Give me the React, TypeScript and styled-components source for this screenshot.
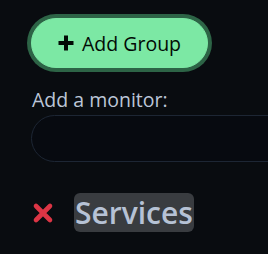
import styled, { createGlobalStyle } from 'styled-components'

const GlobalStyle = createGlobalStyle`
  html, body {
    margin: 0;
    padding: 0;
    background: #090c10;
    overflow: hidden;
  }
  body {
    font-family: "Open Sans", "Noto Sans", sans-serif;
    color: #b1b8c0;
  }
`

const Page = styled.div`
  width: 268px;
  height: 254px;
  padding: 18px 0 0 31px;
  box-sizing: border-box;
  display: flex;
  flex-direction: column;
  align-items: flex-start;
  overflow: hidden;
`

const AddGroupButton = styled.button`
  height: 50px;
  padding: 0 26px 0 26px;
  display: flex;
  align-items: center;
  gap: 8px;
  background: #7ce8a4;
  color: #020b05;
  border: 1px solid #7ce8a4;
  border-radius: 28px;
  box-shadow: 0 0 0 4px #2d6446;
  font-family: inherit;
  font-size: 19.5px;
  cursor: pointer;

  svg {
    width: 16px;
    height: 16px;
  }
`

const MonitorForm = styled.div`
  margin-top: 20px;
  width: 320px;
  display: flex;
  flex-direction: column;
  gap: 3px;
`

const Label = styled.label`
  font-size: 19.5px;
  line-height: 24px;
  color: #bcc6d8;
  padding-left: 1px;
`

const MonitorInput = styled.input`
  height: 47px;
  box-sizing: border-box;
  background: #070a10;
  border: 1px solid #1d2634;
  border-radius: 24px;
  padding: 0 18px;
  color: #b1b8c0;
  font-family: inherit;
  font-size: 16px;
  outline: none;
`

const GroupRow = styled.div`
  margin-top: 31px;
  display: flex;
  align-items: center;
  gap: 20px;
  padding-left: 1px;
`

const RemoveIcon = styled.svg`
  width: 22px;
  height: 22px;
  color: #dc3545;
`

const GroupTitle = styled.h2`
  margin: 0;
  font-size: 30px;
  font-weight: 600;
  line-height: 39px;
  color: #b6c2d5;
  background: #393c40;
  border-radius: 6px;
  padding: 0 1px;
`

function App() {
  return (
    <>
      <GlobalStyle />
      <Page>
        <AddGroupButton>
          <svg viewBox="0 0 16 16">
            <path d="M8 0.5v15M0.5 8h15" stroke="currentColor" strokeWidth="4" />
          </svg>
          Add Group
        </AddGroupButton>
        <MonitorForm>
          <Label>Add a monitor:</Label>
          <MonitorInput type="text" />
        </MonitorForm>
        <GroupRow>
          <RemoveIcon viewBox="0 0 22 22">
            <path d="M4 4l14 14M18 4L4 18" stroke="currentColor" strokeWidth="4.6" strokeLinecap="round" />
          </RemoveIcon>
          <GroupTitle contentEditable suppressContentEditableWarning>Services</GroupTitle>
        </GroupRow>
      </Page>
    </>
  )
}

export default App
